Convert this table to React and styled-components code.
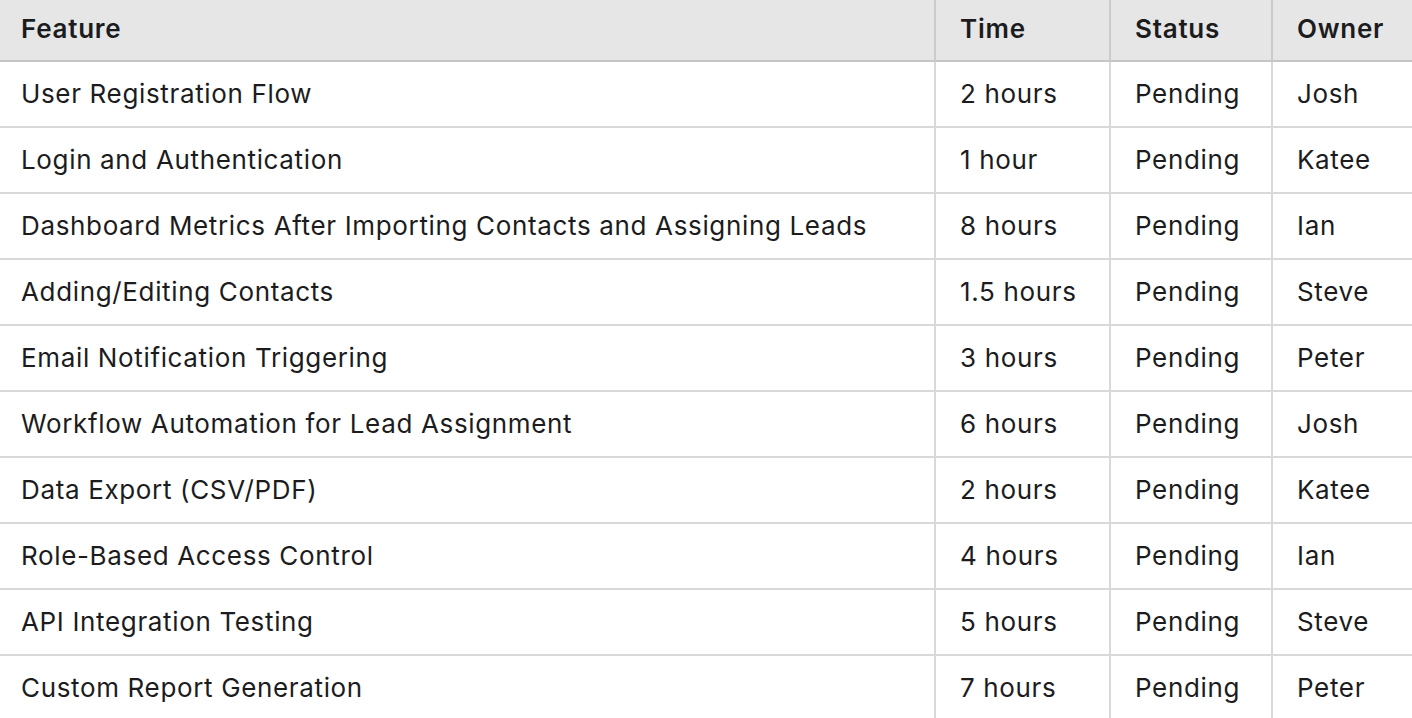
import React from "react";
import styled, { createGlobalStyle } from "styled-components";

const Global = createGlobalStyle`
  html, body { margin: 0; padding: 0; background: #ffffff; overflow: hidden; }
  body { font-family: Inter, "Noto Sans", "Liberation Sans", sans-serif; color: #1c1c1e; }
`;

const Table = styled.div`
  display: grid;
  grid-template-columns: 934px 175px 162px 180px;
  width: max-content;
`;

const Cell = styled.div`
  box-sizing: border-box;
  display: flex;
  align-items: center;
  height: ${(p) => (p.$head ? "62px" : "66px")};
  padding: 0 0 ${(p) => (p.$head ? "4px" : "2px")} ${(p) => (p.$first ? "21px" : "24px")};
  border-bottom: 2px solid ${(p) => (p.$head ? "#c6c6c6" : "#d9d9d9")};
  border-left: ${(p) => (p.$first ? "none" : `2px solid ${p.$head ? "#cbcbcb" : "#d9d9d9"}`)};
  background: ${(p) => (p.$head ? "#e6e6e6" : "#ffffff")};
  font-size: 26px;
  font-weight: ${(p) => (p.$head ? 600 : 400)};
  letter-spacing: ${(p) => (p.$head ? "0.75px" : "0.65px")};
  white-space: nowrap;
`;

const headers = ["Feature", "Time", "Status", "Owner"];

const rows = [
  ["User Registration Flow", "2 hours", "Pending", "Josh"],
  ["Login and Authentication", "1 hour", "Pending", "Katee"],
  ["Dashboard Metrics After Importing Contacts and Assigning Leads", "8 hours", "Pending", "Ian"],
  ["Adding/Editing Contacts", "1.5 hours", "Pending", "Steve"],
  ["Email Notification Triggering", "3 hours", "Pending", "Peter"],
  ["Workflow Automation for Lead Assignment", "6 hours", "Pending", "Josh"],
  ["Data Export (CSV/PDF)", "2 hours", "Pending", "Katee"],
  ["Role-Based Access Control", "4 hours", "Pending", "Ian"],
  ["API Integration Testing", "5 hours", "Pending", "Steve"],
  ["Custom Report Generation", "7 hours", "Pending", "Peter"],
];

export default function App() {
  return (
    <>
      <Global />
      <Table>
        {headers.map((h, i) => (
          <Cell key={h} $head $first={i === 0}>{h}</Cell>
        ))}
        {rows.map((r, ri) =>
          r.map((c, ci) => (
            <Cell key={ri + "-" + ci} $first={ci === 0}>{c}</Cell>
          ))
        )}
      </Table>
    </>
  );
}
